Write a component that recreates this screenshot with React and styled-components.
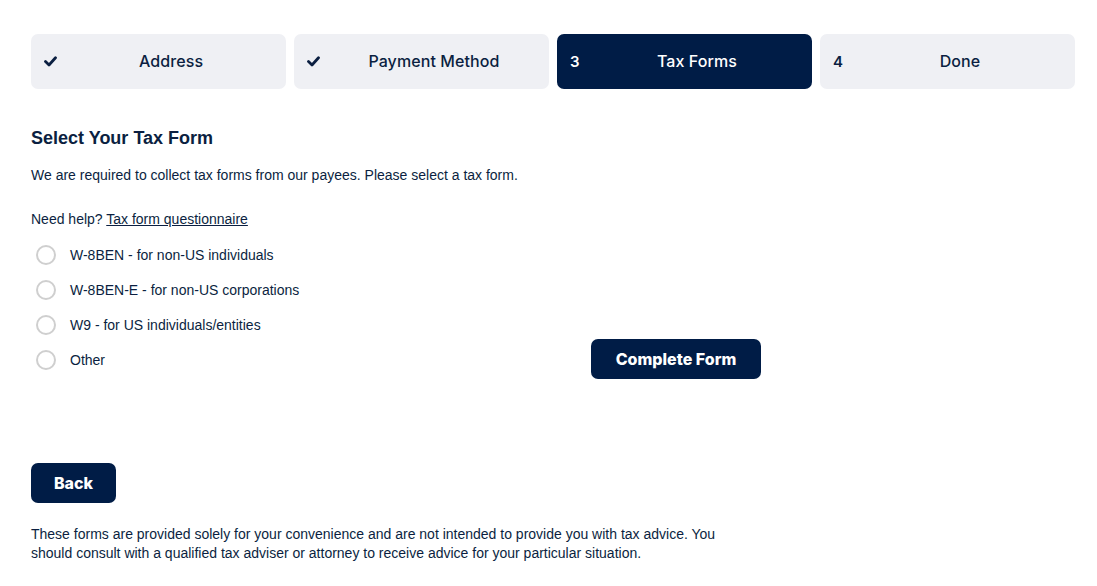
import React from "react";
import styled, { createGlobalStyle } from "styled-components";

const NAVY = "#001c46";
const TEXT = "#0b1f41";

const Global = createGlobalStyle`
  html, body { margin: 0; padding: 0; background: #fff; }
  body { font-family: "Liberation Sans", Arial, sans-serif; color: ${TEXT}; }
  * { box-sizing: border-box; }
`;

const Page = styled.div`
  padding: 34px 22px 0 31px;
`;

const Steps = styled.div`
  display: grid;
  grid-template-columns: repeat(4, 1fr);
  gap: 8px;
`;

const Step = styled.div`
  position: relative;
  height: 55px;
  border-radius: 7px;
  background: ${(p) => (p.$active ? NAVY : "#eff0f4")};
  color: ${(p) => (p.$active ? "#fff" : TEXT)};
  display: flex;
  align-items: center;
  justify-content: center;
  padding: 0 0 2px 25px;
  font-family: Inter, "Noto Sans", sans-serif;
  font-size: 16px;
  font-weight: 500;
  letter-spacing: 0.1px;
`;

const StepMark = styled.span`
  position: absolute;
  left: 13px;
  top: 50%;
  transform: translateY(-55%);
  display: flex;
  align-items: center;
  font-size: 15px;
  font-weight: 600;
`;

const Content = styled.div`
  width: 730px;
`;

const Heading = styled.h2`
  margin: 39px 0 0;
  font-size: 18px;
  font-weight: 700;
  line-height: 21px;
  height: 21px;
`;

const Para = styled.p`
  margin: ${(p) => p.$m || "0"};
  font-size: 14px;
  line-height: 19px;
  max-width: ${(p) => p.$w || "none"};
`;

const Link = styled.a`
  color: ${TEXT};
  text-decoration: underline;
`;

const FormRow = styled.div`
  display: flex;
  justify-content: space-between;
  align-items: flex-end;
  margin-top: 16px;
`;

const RadioList = styled.div`
  display: flex;
  flex-direction: column;
  gap: 15px;
`;

const RadioRow = styled.label`
  display: flex;
  align-items: center;
  gap: 14px;
  height: 20px;
  font-size: 14px;
  padding-left: 5px;
`;

const Circle = styled.span`
  width: 20px;
  height: 20px;
  border-radius: 50%;
  border: 2px solid #cfcfcf;
  background: #fff;
  flex: none;
`;

const Button = styled.button`
  border: none;
  border-radius: 7px;
  background: ${NAVY};
  color: #fff;
  height: 40px;
  width: ${(p) => p.$w};
  font-family: Inter, "Noto Sans", sans-serif;
  font-size: 16px;
  font-weight: 800;
  padding: 0;
  cursor: pointer;
`;

const FormButton = styled(Button)`
  margin-bottom: -9px;
`;

const BackWrap = styled.div`
  margin-top: 93px;
`;

const Check = () => (
  <svg width="13" height="11" viewBox="0 0 13 11">
    <path d="M1.5 5.5 L5 9 L11.5 1.8" fill="none" stroke="currentColor" strokeWidth="2.8" strokeLinecap="round" strokeLinejoin="round" />
  </svg>
);

const steps = [
  { label: "Address", mark: <Check /> },
  { label: "Payment Method", mark: <Check /> },
  { label: "Tax Forms", mark: "3", active: true },
  { label: "Done", mark: "4" },
];

const options = [
  "W-8BEN - for non-US individuals",
  "W-8BEN-E - for non-US corporations",
  "W9 - for US individuals/entities",
  "Other",
];

export default function App() {
  return (
    <>
      <Global />
      <Page>
        <Steps>
          {steps.map((s) => (
            <Step key={s.label} $active={s.active}>
              <StepMark>{s.mark}</StepMark>
              {s.label}
            </Step>
          ))}
        </Steps>
        <Content>
          <Heading>Select Your Tax Form</Heading>
          <Para $m="17px 0 0">We are required to collect tax forms from our payees. Please select a tax form.</Para>
          <Para $m="25px 0 0">
            Need help? <Link href="#">Tax form questionnaire</Link>
          </Para>
          <FormRow>
            <RadioList>
              {options.map((o) => (
                <RadioRow key={o}>
                  <Circle />
                  {o}
                </RadioRow>
              ))}
            </RadioList>
            <FormButton $w="170px">Complete Form</FormButton>
          </FormRow>
          <BackWrap>
            <Button $w="85px">Back</Button>
          </BackWrap>
          <Para $m="22px 0 0" $w="700px">
            These forms are provided solely for your convenience and are not intended to provide you with tax advice. You should consult with a qualified tax adviser or attorney to receive advice for your particular situation.
          </Para>
        </Content>
      </Page>
    </>
  );
}
